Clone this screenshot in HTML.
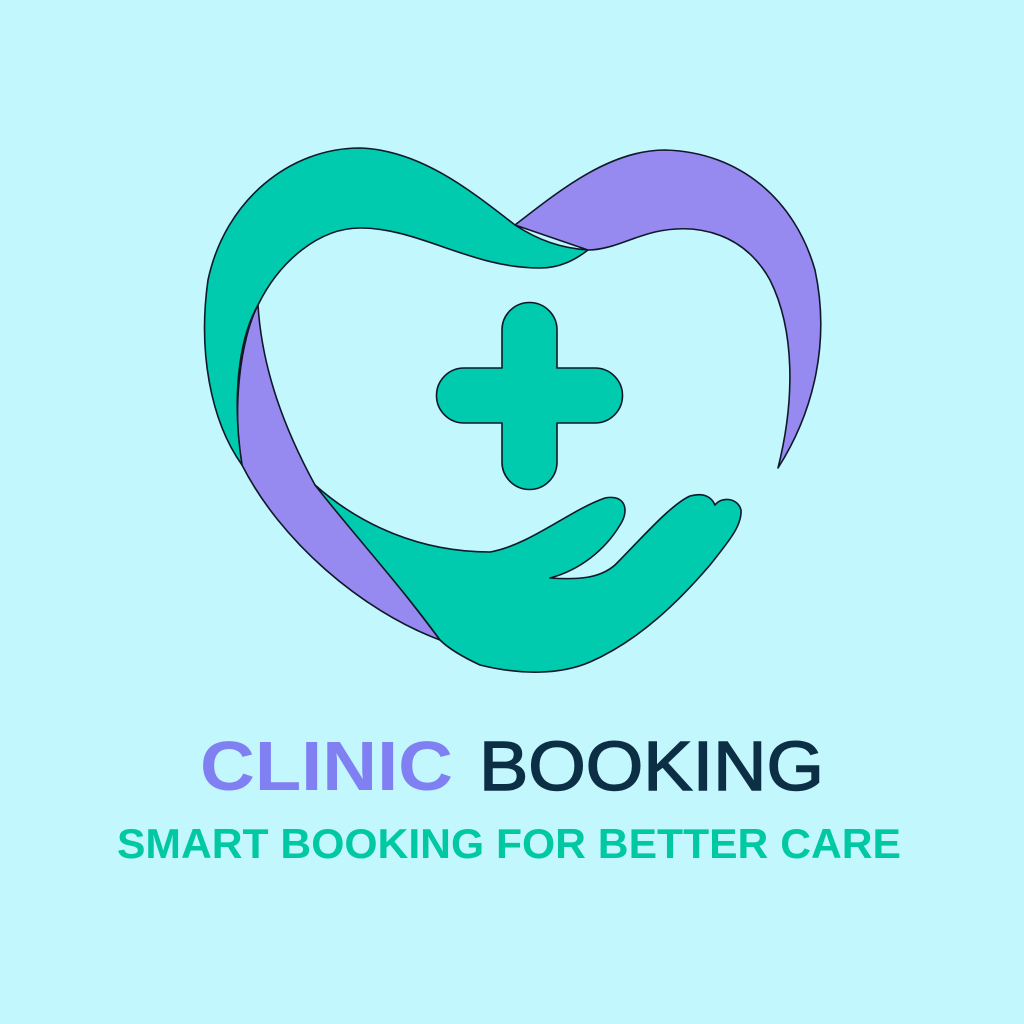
<!DOCTYPE html>
<html><head><style>html,body{margin:0;padding:0;background:#c2f7fd;}svg{display:block}</style></head>
<body>
<svg width="1024" height="1024" viewBox="0 0 1024 1024" xmlns="http://www.w3.org/2000/svg">
<rect width="1024" height="1024" fill="#c2f7fd"/>
<g stroke="#101828" stroke-width="1.6" stroke-linejoin="round">
<!-- purple right band -->
<path fill="#968af0" d="M515,225 C560,190 610,150 665,150 C740,152 795,200 815,270 C830,340 815,410 778,468 C795,400 795,330 770,280 C745,235 700,222 655,232 C630,238 610,250 588,250 Z"/>
<!-- purple lower-left band -->
<path fill="#968af0" d="M258,305 C240,340 232,410 242,465 C280,540 360,610 440,640 C395,580 345,520 315,485 C285,430 262,370 258,305 Z"/>
<!-- green top-left band -->
<path fill="#00cbae" d="M515,225 C470,190 420,150 360,148 C290,148 225,200 208,280 C198,350 210,420 242,465 C232,400 238,340 258,305 C280,260 320,228 360,228 C420,228 470,268 540,268 C560,268 575,260 588,250 C560,248 538,240 515,225 Z"/>
<!-- hand -->
<path fill="#00cbae" d="M315,485 C360,525 420,552 490,552 C530,545 570,510 605,498 C625,494 630,510 620,525 C605,550 580,570 550,578 C580,580 600,578 615,565 C640,540 670,505 690,496 C705,492 712,498 715,505 C722,496 738,498 741,510 C742,525 730,540 710,565 C680,600 640,640 590,662 C560,675 520,675 480,665 C465,658 450,650 440,640 C400,585 350,530 315,485 Z"/>
<!-- cross -->
<path fill="#00cbae" d="M502,330 A27.5,27.5 0 0 1 557,330 L557,368 L595,368 A27.5,27.5 0 0 1 595,423 L557,423 L557,462 A27.5,27.5 0 0 1 502,462 L502,423 L464,423 A27.5,27.5 0 0 1 464,368 L502,368 Z"/>
</g>
<text x="200" y="790" font-family="Liberation Sans, sans-serif" font-weight="bold" font-size="70" fill="#8080f2" textLength="253" lengthAdjust="spacingAndGlyphs">CLINIC</text>
<text x="479" y="790" font-family="Liberation Sans, sans-serif" font-size="70" fill="#0c2f45" stroke="#0c2f45" stroke-width="1.5" textLength="345" lengthAdjust="spacingAndGlyphs">BOOKING</text>
<text x="117" y="858" font-family="Liberation Sans, sans-serif" font-weight="bold" font-size="42" fill="#00c8a2" textLength="784" lengthAdjust="spacingAndGlyphs">SMART BOOKING FOR BETTER CARE</text>
</svg>
</body></html>
